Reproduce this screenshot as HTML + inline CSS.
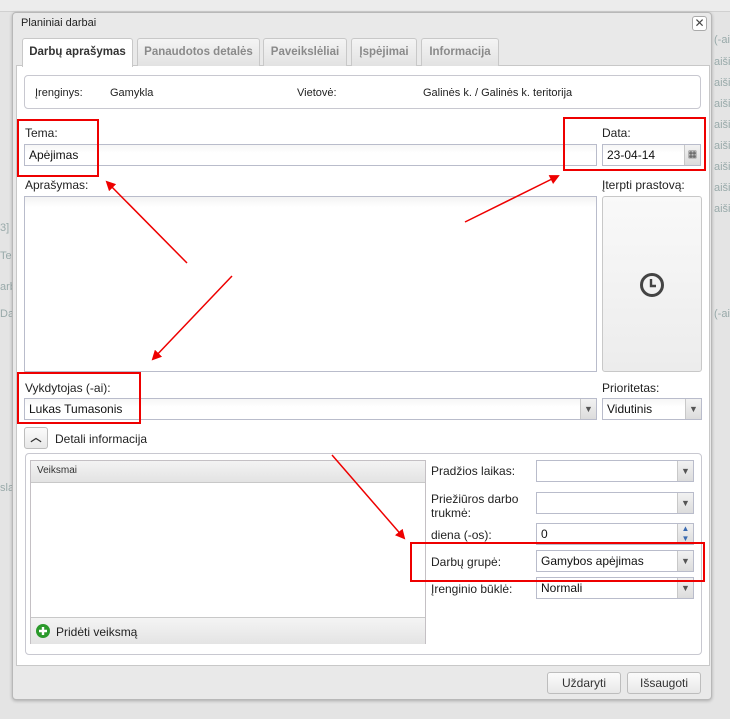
<!DOCTYPE html>
<html><head><meta charset="utf-8"><style>
*{box-sizing:border-box;margin:0;padding:0}
body{width:730px;height:719px;background:#e4e4e4;font-family:"Liberation Sans",sans-serif;font-size:12px;color:#222;position:relative;overflow:hidden}
.a{position:absolute;white-space:nowrap}
.dlg{left:12px;top:12px;width:700px;height:688px;background:#e9e9e9;border:1px solid #b8b8b8;border-radius:4px;box-shadow:0 1px 3px rgba(0,0,0,.25)}
.tab{top:38px;height:28px;border:1px solid #c8c8c8;border-bottom:none;border-radius:3px 3px 0 0;background:linear-gradient(#f4f4f4,#e2e2e2);color:#8a8a8a;font-weight:bold;font-size:11.5px;line-height:26px;text-align:center}
.tab.on{background:#fff;color:#333;height:29px}
.panel{left:16px;top:65px;width:694px;height:601px;background:#fff;border:1px solid #c8c8c8}
.inp{border:1px solid #b9bccb;background:linear-gradient(#f6f6f6,#fff 40%);height:22px;line-height:20px;padding-left:4px;font-size:12px;color:#111}
.dd{position:absolute;right:0;top:0;width:16px;height:20px;background:linear-gradient(#f2f2f2,#dcdcdc);border-left:1px solid #c8c8c8;color:#555;font-size:9px;text-align:center;line-height:20px}
.red{border:2px solid #e00}
.lbl{font-size:12px;color:#222}
.btn{border:1px solid #bdbdbd;border-radius:3px;background:linear-gradient(#fbfbfb,#e8e8e8);height:22px;line-height:20px;text-align:center;font-size:12px;color:#333}
.bg{color:#9aa;font-size:11px}
</style></head><body>
<div class="a bg" style="left:714px;top:34px">(-ai)</div>
<div class="a bg" style="left:714px;top:56px">aiši</div>
<div class="a bg" style="left:714px;top:77px">aiši</div>
<div class="a bg" style="left:714px;top:98px">aiši</div>
<div class="a bg" style="left:714px;top:119px">aiši</div>
<div class="a bg" style="left:714px;top:140px">aiši</div>
<div class="a bg" style="left:714px;top:161px">aiši</div>
<div class="a bg" style="left:714px;top:182px">aiši</div>
<div class="a bg" style="left:714px;top:203px">aiši</div>
<div class="a bg" style="left:714px;top:308px">(-ai)</div>
<div class="a bg" style="left:0;top:222px">3]</div>
<div class="a bg" style="left:0;top:250px">Tec</div>
<div class="a bg" style="left:0;top:281px">arb</div>
<div class="a bg" style="left:0;top:308px">Dat</div>
<div class="a bg" style="left:0;top:482px">sla</div>
<div class="a" style="left:0;top:0;width:730px;height:12px;background:#ececec;border-bottom:1px solid #d0d0d0"></div>

<div class="a dlg"></div>
<div class="a" style="left:21px;top:17px;font-size:11px;color:#222">Planiniai darbai</div>
<div class="a" style="left:692px;top:16px;width:15px;height:15px;border:1px solid #aaa;border-radius:3px;background:#fff;font-size:12px;line-height:13px;text-align:center;color:#444">✕</div>

<div class="a panel"></div>
<div class="a tab on" style="left:22px;width:111px">Darbų aprašymas</div>
<div class="a tab" style="left:137px;width:123px">Panaudotos detalės</div>
<div class="a tab" style="left:263px;width:84px">Paveikslėliai</div>
<div class="a tab" style="left:351px;width:66px">Įspėjimai</div>
<div class="a tab" style="left:421px;width:78px">Informacija</div>

<div class="a" style="left:24px;top:75px;width:677px;height:34px;border:1px solid #c8c8d0;border-radius:4px"></div>
<div class="a lbl" style="left:35px;top:87px;font-size:11px">Įrenginys:</div>
<div class="a lbl" style="left:110px;top:87px;font-size:11px">Gamykla</div>
<div class="a lbl" style="left:297px;top:87px;font-size:11px">Vietovė:</div>
<div class="a lbl" style="left:423px;top:87px;font-size:11px">Galinės k. / Galinės k. teritorija</div>

<div class="a lbl" style="left:25px;top:126px">Tema:</div>
<div class="a inp" style="left:24px;top:144px;width:573px">Apėjimas</div>
<div class="a lbl" style="left:602px;top:126px">Data:</div>
<div class="a inp" style="left:602px;top:144px;width:99px">23-04-14<div class="dd" style="font-size:10px">▦</div></div>

<div class="a lbl" style="left:25px;top:178px">Aprašymas:</div>
<div class="a" style="left:24px;top:196px;width:573px;height:176px;border:1px solid #b9bccb;background:linear-gradient(#f3f3f3,#fff 10px)"></div>
<div class="a lbl" style="left:602px;top:178px">Įterpti prastovą:</div>
<div class="a" style="left:602px;top:196px;width:100px;height:176px;border:1px solid #c8c8c8;border-radius:3px;background:linear-gradient(#f9f9f9,#ececec)"></div>
<svg class="a" style="left:639px;top:272px" width="26" height="26" viewBox="0 0 26 26"><circle cx="13" cy="13" r="10.5" fill="none" stroke="#444" stroke-width="3"/><path d="M12 7v7h5" fill="none" stroke="#444" stroke-width="2.4"/></svg>

<div class="a lbl" style="left:25px;top:381px">Vykdytojas (-ai):</div>
<div class="a inp" style="left:24px;top:398px;width:573px;height:22px">Lukas Tumasonis<div class="dd">▼</div></div>
<div class="a lbl" style="left:602px;top:381px">Prioritetas:</div>
<div class="a inp" style="left:602px;top:398px;width:100px">Vidutinis<div class="dd">▼</div></div>

<div class="a btn" style="left:24px;top:427px;width:24px;height:22px;font-size:11px;font-weight:bold">︿</div>
<div class="a lbl" style="left:55px;top:432px">Detali informacija</div>

<div class="a" style="left:25px;top:453px;width:677px;height:202px;border:1px solid #c8c8d0;border-radius:4px"></div>
<div class="a" style="left:30px;top:460px;width:396px;height:184px;border:1px solid #c4c0c4"></div>
<div class="a" style="left:31px;top:461px;width:394px;height:22px;background:linear-gradient(#f3f3f3,#e3e3e3);border-bottom:1px solid #c8c8c8;font-size:10px;line-height:20px;padding-left:6px;color:#333">Veiksmai</div>
<div class="a" style="left:31px;top:617px;width:394px;height:27px;background:linear-gradient(#f4f4f4,#e4e4e4);border-top:1px solid #c8c8c8"></div>
<svg class="a" style="left:36px;top:624px" width="14" height="14" viewBox="0 0 14 14"><circle cx="7" cy="7" r="7" fill="#2b9a2b"/><path d="M7 3v8M3 7h8" stroke="#fff" stroke-width="2.4"/></svg>
<div class="a lbl" style="left:56px;top:625px">Pridėti veiksmą</div>

<div class="a lbl" style="left:431px;top:464px">Pradžios laikas:</div>
<div class="a inp" style="left:536px;top:460px;width:158px;background:#fff">&nbsp;<div class="dd">▼</div></div>
<div class="a lbl" style="left:431px;top:492px;line-height:14px">Priežiūros darbo<br>trukmė:</div>
<div class="a inp" style="left:536px;top:492px;width:158px;background:#fff">&nbsp;<div class="dd">▼</div></div>
<div class="a lbl" style="left:431px;top:528px">diena (-os):</div>
<div class="a inp" style="left:536px;top:523px;width:158px;background:#fff">0<div class="dd" style="line-height:10px;font-size:8px;color:#3a6ab0">▲<br>▼</div></div>
<div class="a lbl" style="left:431px;top:555px">Darbų grupė:</div>
<div class="a inp" style="left:536px;top:550px;width:158px;background:#fff">Gamybos apėjimas<div class="dd">▼</div></div>
<div class="a lbl" style="left:431px;top:582px">Įrenginio būklė:</div>
<div class="a inp" style="left:536px;top:577px;width:158px;background:#fff">Normali<div class="dd">▼</div></div>

<div class="a btn" style="left:547px;top:672px;width:74px">Uždaryti</div>
<div class="a btn" style="left:627px;top:672px;width:74px">Išsaugoti</div>

<div class="a red" style="left:17px;top:119px;width:82px;height:58px"></div>
<div class="a red" style="left:563px;top:117px;width:143px;height:54px"></div>
<div class="a red" style="left:17px;top:372px;width:124px;height:52px"></div>
<div class="a red" style="left:410px;top:542px;width:295px;height:40px"></div>

<svg class="a" style="left:0;top:0" width="730" height="719">
<defs><marker id="m" markerWidth="10" markerHeight="10" refX="8" refY="5" orient="auto" markerUnits="userSpaceOnUse"><path d="M0 0L10 5L0 10z" fill="#e00"/></marker></defs>
<g stroke="#e00" stroke-width="1.5" fill="none">
<line x1="187" y1="263" x2="107" y2="182" marker-end="url(#m)"/>
<line x1="232" y1="276" x2="153" y2="359" marker-end="url(#m)"/>
<line x1="465" y1="222" x2="558" y2="176" marker-end="url(#m)"/>
<line x1="332" y1="455" x2="404" y2="538" marker-end="url(#m)"/>
</g></svg>
</body></html>
